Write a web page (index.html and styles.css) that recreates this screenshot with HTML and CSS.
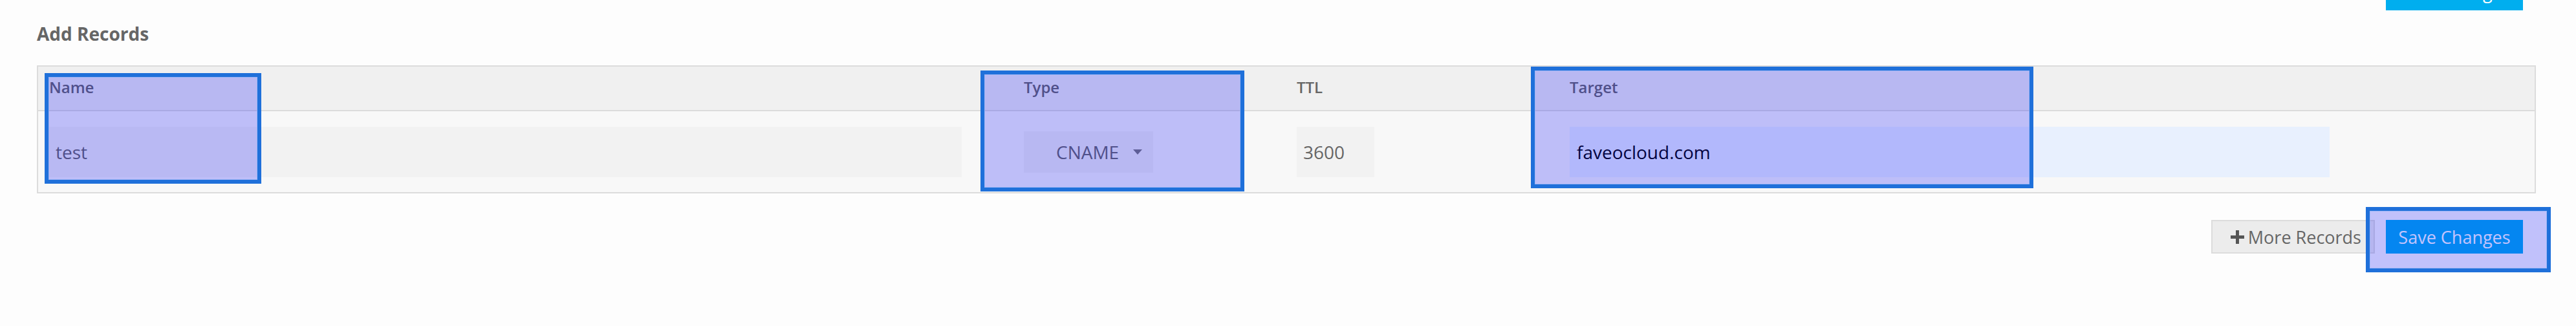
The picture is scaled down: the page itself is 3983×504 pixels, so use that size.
FILE: index.html
```html
<!DOCTYPE html>
<html lang="en">
<head>
<meta charset="utf-8">
<title>Add Records</title>
<link rel="stylesheet" href="styles.css">
</head>
<body>
<div class="page">
  <div class="top-strip">
    <button class="btn btn-primary btn-clipped">Save Changes</button>
  </div>

  <h2 class="title">Add Records</h2>

  <div class="records">
    <div class="row head">
      <div class="cell">Name</div>
      <div class="cell">Type</div>
      <div class="cell">TTL</div>
      <div class="cell">Target</div>
    </div>
    <div class="row body">
      <div class="cell"><div class="field field-name">test</div></div>
      <div class="cell">
        <div class="select">
          <span>CNAME</span>
          <svg class="caret" width="14" height="8" viewBox="0 0 14 8"><path d="M0 0h14L7 8z" fill="#777"/></svg>
        </div>
      </div>
      <div class="cell"><div class="field field-ttl">3600</div></div>
      <div class="cell"><div class="field field-target">faveocloud.com</div></div>
    </div>
  </div>

  <div class="actions">
    <button class="btn btn-default">
      <svg class="plus" width="21" height="21" viewBox="0 0 21 21"><path d="M8 0h5v8h8v5h-8v8H8v-8H0V8h8z" fill="#555"/></svg>
      <span>More Records</span>
    </button>
    <button class="btn btn-primary">Save Changes</button>
  </div>

  <div class="mark mark-name"></div>
  <div class="mark mark-type"></div>
  <div class="mark mark-target"></div>
  <div class="mark mark-save"></div>
</div>
</body>
</html>
```

FILE: styles.css
```css
* { box-sizing: border-box; }

html, body {
  margin: 0;
  padding: 0;
  background: #fdfdfd;
}

body {
  font-family: "Open Sans", "Liberation Sans", sans-serif;
  color: #666;
}

.page {
  position: relative;
  width: 3983px;
  height: 504px;
  padding: 0 62px 0 57px;
  overflow: hidden;
}

.top-strip {
  height: 16px;
  overflow: hidden;
  display: flex;
  justify-content: flex-end;
  align-items: flex-end;
  padding-right: 20px;
}

.title {
  margin: 17px 0 0;
  font-size: 28px;
  font-weight: 700;
  line-height: 38px;
  color: #666;
}

.records {
  margin-top: 30px;
  border: 2px solid #dcdcdc;
}

.row {
  display: grid;
  grid-template-columns: 1507px 422px 422px 1fr;
  padding-left: 17px;
}

.head {
  height: 69px;
  padding-top: 15px;
  background: #f0f0f0;
  border-bottom: 2px solid #dcdcdc;
  font-size: 24px;
  font-weight: 600;
  color: #666;
  align-items: start;
}

.body {
  height: 125px;
  background: #f8f8f8;
  align-items: center;
}

.field {
  height: 78px;
  display: flex;
  align-items: center;
  padding-left: 10px;
  font-size: 28px;
  color: #666;
  background: #f2f2f2;
}

.field-name { width: 1411px; }
.field-ttl { width: 120px; }
.field-target {
  width: 1175px;
  padding-left: 11px;
  background: #e8f0fe;
  color: #000;
}

.select {
  width: 200px;
  height: 64px;
  display: flex;
  align-items: center;
  padding: 0 17px 0 50px;
  background: #f0f0f0;
  font-size: 28px;
  color: #666;
}

.caret { margin-left: auto; }

.actions {
  margin-top: 41px;
  display: flex;
  justify-content: flex-end;
  gap: 17px;
  padding-right: 20px;
}

.btn {
  height: 52px;
  margin: 0;
  font-family: inherit;
  font-size: 27px;
  line-height: 1;
  display: flex;
  align-items: center;
  justify-content: center;
  cursor: pointer;
  flex: none;
}

.btn-primary {
  width: 212px;
  border: 0;
  background: #00aeef;
  color: #fff;
}

.btn-clipped {
  align-items: flex-start;
  padding-top: 10px;
}

.btn-default {
  padding: 0 19px 0 28px;
  border: 2px solid #dcdcdc;
  background: #ececec;
  color: #666;
  gap: 6px;
}

.plus { display: block; }

.mark {
  position: absolute;
  border: 6px solid #1f70da;
  background: rgba(16, 16, 248, 0.25);
  box-shadow: inset 0 0 0 1px rgba(150, 180, 245, 0.8);
}

.mark-name { left: 69px; top: 113px; width: 335px; height: 171px; }
.mark-type { left: 1516px; top: 109px; width: 408px; height: 187px; }
.mark-target { left: 2367px; top: 103px; width: 777px; height: 188px; }
.mark-save { left: 3658px; top: 320px; width: 286px; height: 101px; }
```
